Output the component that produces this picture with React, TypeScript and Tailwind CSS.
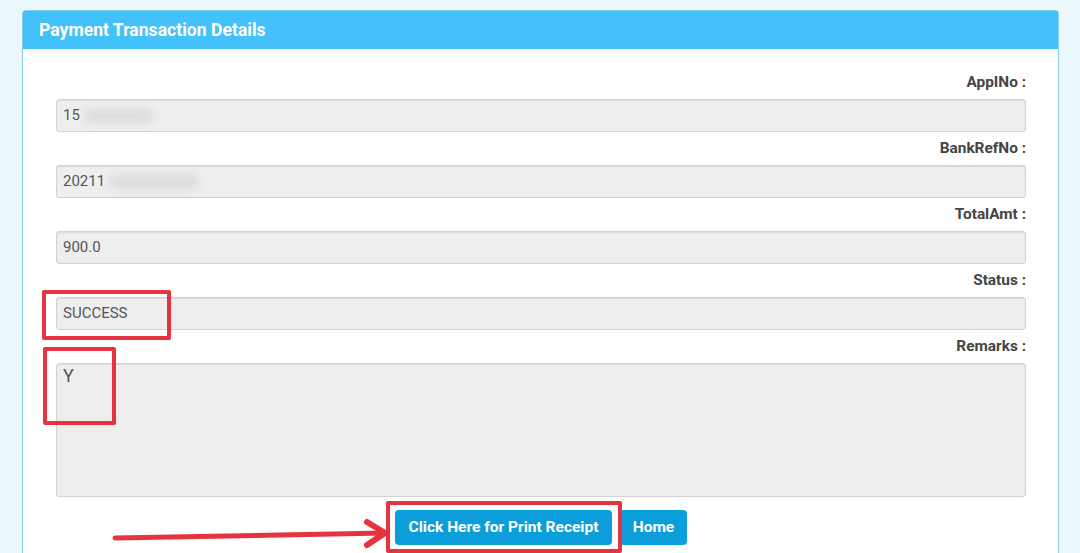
import React from 'react';

const fields = [
  { label: 'AppINo :', value: '15', blur: 'w-[70px]' },
  { label: 'BankRefNo :', value: '20211', blur: 'w-[90px]' },
  { label: 'TotalAmt :', value: '900.0', blur: '' },
  { label: 'Status :', value: 'SUCCESS', blur: '' },
];

const font = { fontFamily: 'Roboto, "Noto Sans", sans-serif' };

export default function App() {
  return (
    <div className="w-[1080px] h-[553px] overflow-hidden bg-[#eaf7fc] pt-[10px] pl-[22px] pr-[21px]" style={font}>
      <div className="relative border border-[#86cde6] rounded-t-[4px] bg-white h-[600px]">
        <div className="h-[38px] bg-[#42c1fb] flex items-center px-[16px]">
          <h1 className="text-white font-bold text-[17.6px]">Payment Transaction Details</h1>
        </div>

        <div className="px-[33px] pr-[32px] pt-[23px]">
          {fields.map((f) => (
            <div key={f.label} className="mb-[6px]">
              <div className="h-[20px] text-right text-[15.4px] font-bold text-[#444] leading-[21px] mb-[7px]">
                {f.label}
              </div>
              <div className="h-[33px] bg-[#eeeeee] border border-[#d2d2d2] rounded-[3px] shadow-[inset_0_1px_1px_rgba(0,0,0,0.08)] flex items-center px-[6px] text-[15px] text-[#555]">
                <span>{f.value}</span>
                {f.blur && (
                  <span className={`ml-[4px] h-[14px] ${f.blur} rounded-full bg-[#dcdcdc] blur-[4px]`} />
                )}
              </div>
            </div>
          ))}

          <div className="h-[20px] text-right text-[15.4px] font-bold text-[#444] leading-[21px] mb-[7px]">
            Remarks :
          </div>
          <div className="h-[134px] bg-[#eeeeee] border border-[#d2d2d2] rounded-[3px] shadow-[inset_0_1px_1px_rgba(0,0,0,0.08)] px-[6px] text-[18px] leading-[24px] text-[#555]">
            Y
          </div>

          <div className="flex justify-center gap-[8px] mt-[13px]">
            <button className="h-[35px] w-[217px] bg-[#0c9ddb] rounded-[4px] text-white font-bold text-[15.5px]">
              Click Here for Print Receipt
            </button>
            <button className="h-[35px] w-[67px] bg-[#0c9ddb] rounded-[4px] text-white font-bold text-[15.5px]">
              Home
            </button>
          </div>
        </div>

        {/* annotation overlays */}
        <div className="absolute left-[19px] top-[279px] w-[129px] h-[50px] border-[4px] border-[#e5333f] rounded-[2px]" />
        <div className="absolute left-[20px] top-[336px] w-[73px] h-[78px] border-[4px] border-[#e5333f] rounded-[2px]" />
        <div className="absolute left-[363px] top-[490px] w-[236px] h-[52px] border-[4px] border-[#e5333f] rounded-[2px]" />
        <svg className="absolute left-[88px] top-[504px]" width="280" height="34" viewBox="0 0 280 34">
          <path d="M4 23 L274 18" stroke="#e5333f" strokeWidth="5" strokeLinecap="round" fill="none" />
          <path d="M256 7 L274 18 L256 30" stroke="#e5333f" strokeWidth="6" strokeLinecap="round" strokeLinejoin="round" fill="none" />
        </svg>
      </div>
    </div>
  );
}
